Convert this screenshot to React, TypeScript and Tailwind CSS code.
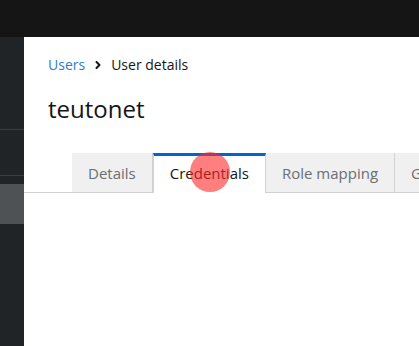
import { ChevronRight } from "lucide-react";

const tabs = [
  { label: "Details", active: false },
  { label: "Credentials", active: true },
  { label: "Role mapping", active: false },
  { label: "Groups", active: false },
];

export default function App() {
  return (
    <div
      className="flex h-[346px] w-[419px] flex-col overflow-hidden bg-white"
      style={{ fontFamily: '"Open Sans", "Liberation Sans", sans-serif' }}
    >
      {/* masthead */}
      <div className="h-[37px] shrink-0 bg-[#151515]" />

      <div className="flex flex-1">
        {/* sidebar */}
        <div className="flex w-6 shrink-0 flex-col bg-[#212427]">
          <div className="h-[92px]" />
          <div className="h-px bg-[#3c3f42]" />
          <div className="h-[45px]" />
          <div className="h-px bg-[#3c3f42]" />
          <div className="h-[8px]" />
          <div className="h-10 bg-[#4f5255]" />
        </div>

        {/* main */}
        <div className="flex min-w-0 flex-1 flex-col">
          <div className="px-6 pt-[19px]">
            <nav className="flex items-center text-[14px] leading-[18px]">
              <span className="text-[#2b7cd3]">Users</span>
              <ChevronRight className="mx-[7px] h-3 w-3 text-[#151515]" strokeWidth={4} />
              <span className="text-[#151515]">User details</span>
            </nav>
            <h1 className="mt-[20px] text-[24px] font-normal leading-[30px] text-[#151515]">
              teutonet
            </h1>
          </div>

          <div className="relative mt-[29px] flex h-[40px] border-b border-[#d2d2d2] pl-12">
            {tabs.map((t) =>
              t.active ? (
                <div
                  key={t.label}
                  className="relative -mb-px flex h-[40px] shrink-0 items-center border-x border-[#d2d2d2] border-t-[3px] border-t-[#0066cc] bg-white px-4 pb-[2px] text-[15px] text-[#151515]"
                >
                  {t.label}
                </div>
              ) : (
                <div
                  key={t.label}
                  className="flex h-[39px] shrink-0 items-center border-r border-[#d2d2d2] bg-[#f0f0f0] px-4 pt-[1px] text-[15px] text-[#6a6e73] last:border-r-0"
                >
                  {t.label}
                </div>
              )
            )}
            {/* click indicator */}
            <div className="pointer-events-none absolute left-[166px] top-[-1px] h-10 w-10 rounded-full bg-[rgba(255,40,40,0.6)]" />
          </div>
        </div>
      </div>
    </div>
  );
}
